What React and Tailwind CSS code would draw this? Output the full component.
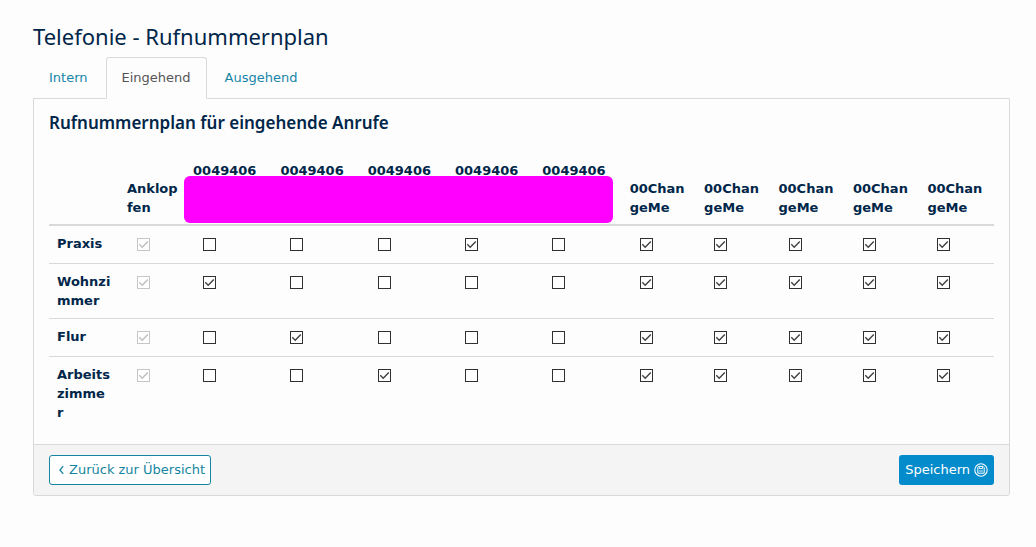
import { Fragment } from "react";

const columns = [
  { id: "knock", label: "Anklopfen", lines: ["Anklop", "fen"] },
  ...[1, 2, 3, 4, 5].map((n) => ({ id: `line${n}`, label: "0049406", lines: ["0049406"], masked: true })),
  ...[1, 2, 3, 4, 5].map((n) => ({ id: `new${n}`, label: "00ChangeMe", lines: ["00Chan", "geMe"] })),
];

const rows = [
  { lines: ["Praxis"], line: 4 },
  { lines: ["Wohnzi", "mmer"], line: 1 },
  { lines: ["Flur"], line: 2 },
  { lines: ["Arbeits", "zimme", "r"], line: 3 },
];

function Lines({ lines }) {
  return lines.map((line, i) => (
    <Fragment key={i}>
      {i > 0 && <br />}
      {line}
    </Fragment>
  ));
}

function Checkbox({ label, checked, disabled }) {
  return (
    <label className="ml-2.5 grid size-[13px] grid-cols-1 grid-rows-1">
      <input
        type="checkbox"
        aria-label={label}
        defaultChecked={checked}
        disabled={disabled}
        className="peer col-start-1 row-start-1 size-[13px] appearance-none border border-[#303030] bg-white disabled:border-[#c6c6c6]"
      />
      <svg
        viewBox="0 0 13 13"
        className="pointer-events-none invisible col-start-1 row-start-1 size-[13px] text-[#404040] peer-checked:visible peer-disabled:text-[#bdbdbd]"
        fill="none"
        stroke="currentColor"
        strokeWidth="1.4"
        aria-hidden="true"
      >
        <path d="M2.3 6.3 5.2 9.2 10.8 3.6" />
      </svg>
    </label>
  );
}

function SaveIcon() {
  return (
    <svg viewBox="0 0 14 14" className="size-3.5" fill="none" stroke="currentColor" aria-hidden="true">
      <circle cx="7" cy="7" r="6.2" strokeWidth="1.1" />
      <path d="M3.8 10.2V4.2L4.6 3.4H9L10.2 4.6V10.2Z" strokeWidth="1" />
      <path d="M5.3 3.6V5.6H8.6V3.6M5.2 8H8.8" strokeWidth="0.9" />
    </svg>
  );
}

export default function App() {
  return (
    <div className="min-h-screen bg-[#fdfdfd] pt-[22px] pr-[26px] pb-8 pl-[33px] font-['DejaVu_Sans',Verdana,sans-serif] text-[13px] leading-[19px] text-[#002649]">
      <h1 className="font-['Noto_Sans',sans-serif] text-[22px] leading-7">Telefonie - Rufnummernplan</h1>

      <nav className="mt-[7px] flex gap-0.5">
        <a href="#intern" className="border border-transparent px-[15px] py-2.5 text-[#1585a8]">Intern</a>
        <a
          href="#eingehend"
          aria-current="page"
          className="z-10 -mb-px rounded-t-[3px] border border-[#d9d9d9] border-b-[#fdfdfd] bg-[#fdfdfd] px-[15px] py-2.5 text-[#555]"
        >
          Eingehend
        </a>
        <a href="#ausgehend" className="border border-transparent px-[15px] py-2.5 text-[#1585a8]">Ausgehend</a>
      </nav>

      <main className="rounded-b-[3px] border border-[#d9d9d9]">
        <section className="px-[15px] py-3.5">
          <h2 className="font-['Noto_Sans',sans-serif] text-[17px] leading-5 font-semibold">
            Rufnummernplan für eingehende Anrufe
          </h2>

          <div className="relative mt-[18px]">
            <table className="w-full table-fixed border-collapse">
              <colgroup>
                <col className="w-[7.4%]" />
                <col className="w-[7%]" />
                {columns.slice(1).map((c) => (
                  <col key={c.id} className={c.masked ? "w-[9.24%]" : "w-[7.88%]"} />
                ))}
              </colgroup>
              <thead>
                <tr className="h-[74px] border-b-2 border-[#d9d9d9]">
                  <td />
                  {columns.map((c) => (
                    <th
                      key={c.id}
                      scope="col"
                      className={`px-2 pt-2.5 pb-[7px] text-left font-bold ${c.masked ? "align-top" : "align-bottom"}`}
                    >
                      <Lines lines={c.lines} />
                    </th>
                  ))}
                </tr>
              </thead>
              <tbody>
                {rows.map((row, i) => (
                  <tr key={i} className="h-[38px] border-b border-[#d9d9d9] last:border-b-0">
                    <th scope="row" className="p-2 text-left align-top font-bold">
                      <Lines lines={row.lines} />
                    </th>
                    {columns.map((c, j) => (
                      <td key={c.id} className="px-2 pt-3 align-top">
                        <Checkbox
                          label={`${row.lines.join("")}: ${c.label}`}
                          checked={!c.masked || j === row.line}
                          disabled={j === 0}
                        />
                      </td>
                    ))}
                  </tr>
                ))}
              </tbody>
            </table>
            <div className="absolute top-[25px] left-[14.3%] h-[47px] w-[45.4%] rounded-md bg-[#ff00ff]" />
          </div>
        </section>

        <footer className="flex items-center justify-between rounded-b-[3px] border-t border-[#d9d9d9] bg-[#f4f4f4] px-[15px] py-2.5">
          <button
            type="button"
            className="flex h-[30px] items-center gap-1 rounded-[3px] border border-[#1585a0] bg-white px-[5px] text-[#1585a0]"
          >
            <svg viewBox="0 0 10 10" className="size-2.5" fill="none" stroke="currentColor" strokeWidth="1.3" aria-hidden="true">
              <path d="M8.2 1.2 5 5 8.2 8.8" />
            </svg>
            Zurück zur Übersicht
          </button>
          <button
            type="button"
            className="flex h-[30px] items-center gap-1 rounded-[3px] bg-[#048bcb] px-1.5 text-white"
          >
            Speichern
            <SaveIcon />
          </button>
        </footer>
      </main>
    </div>
  );
}
